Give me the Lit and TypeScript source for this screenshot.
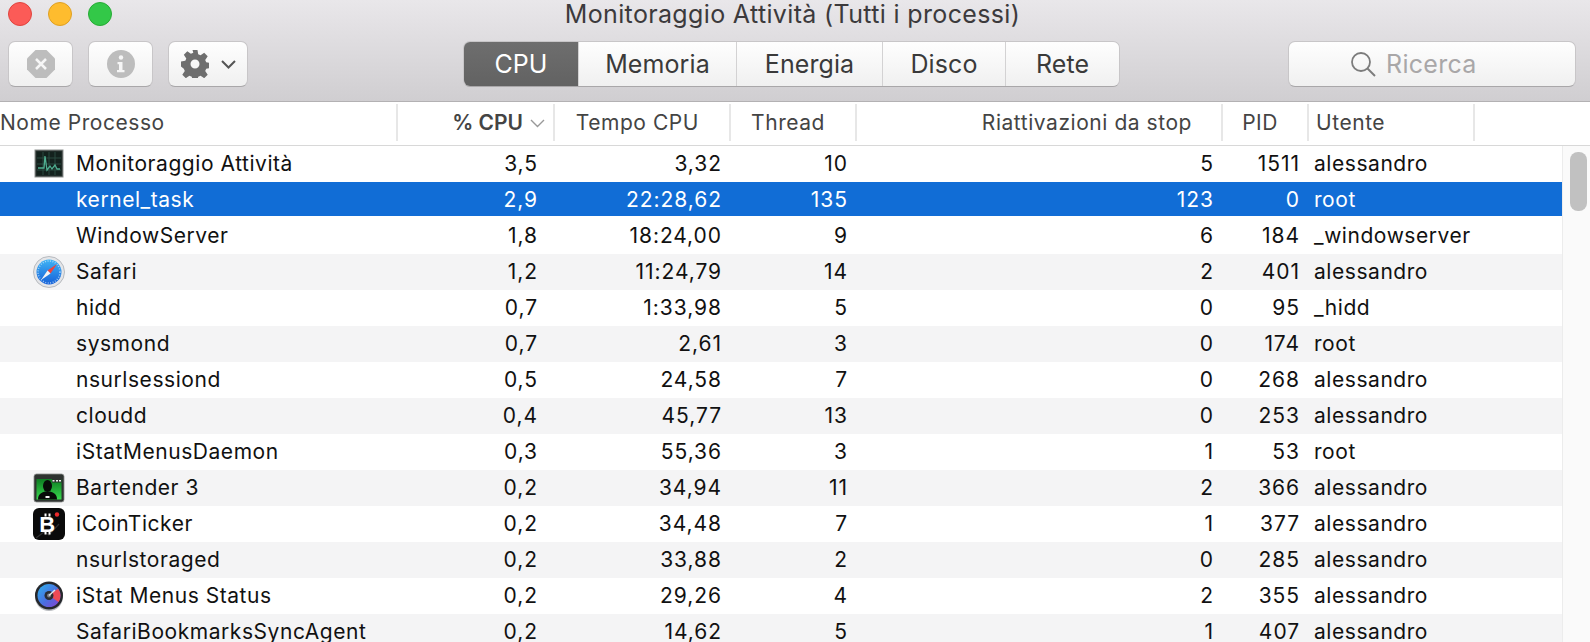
import { LitElement, html, css, svg } from "lit";
import { customElement } from "lit/decorators.js";

const rows: [string, string, string, string, string, string, string, string][] = [
  ["am", "Monitoraggio Attività", "3,5", "3,32", "10", "5", "1511", "alessandro"],
  ["", "kernel_task", "2,9", "22:28,62", "135", "123", "0", "root"],
  ["", "WindowServer", "1,8", "18:24,00", "9", "6", "184", "_windowserver"],
  ["safari", "Safari", "1,2", "11:24,79", "14", "2", "401", "alessandro"],
  ["", "hidd", "0,7", "1:33,98", "5", "0", "95", "_hidd"],
  ["", "sysmond", "0,7", "2,61", "3", "0", "174", "root"],
  ["", "nsurlsessiond", "0,5", "24,58", "7", "0", "268", "alessandro"],
  ["", "cloudd", "0,4", "45,77", "13", "0", "253", "alessandro"],
  ["", "iStatMenusDaemon", "0,3", "55,36", "3", "1", "53", "root"],
  ["bartender", "Bartender 3", "0,2", "34,94", "11", "2", "366", "alessandro"],
  ["coin", "iCoinTicker", "0,2", "34,48", "7", "1", "377", "alessandro"],
  ["", "nsurlstoraged", "0,2", "33,88", "2", "0", "285", "alessandro"],
  ["istat", "iStat Menus Status", "0,2", "29,26", "4", "2", "355", "alessandro"],
  ["", "SafariBookmarksSyncAgent", "0,2", "14,62", "5", "1", "407", "alessandro"],
];

function icon(kind: string) {
  switch (kind) {
    case "am":
      return svg`<svg class="ico" viewBox="0 0 32 32">
        <rect x="2" y="2" width="28" height="27" fill="#2c3432" stroke="#8d918f" stroke-width="1"/>
        <rect x="3.500" y="3.500" width="25" height="24" fill="#13211d"/>
        <path d="M4 10h24M4 16h24M4 22h24M10 4v23M16 4v23M22 4v23" stroke="#2b4a40" stroke-width="1"/>
        <path d="M5 20h6l1-12 2 14 3-4 2 3 3-4 2 4h3" fill="none" stroke="#4fae90" stroke-width="1.300"/>
      </svg>`;
    case "safari":
      return svg`<svg class="ico" viewBox="0 0 32 32">
        <defs><linearGradient id="sf" x1="0" y1="0" x2="0" y2="1"><stop offset="0" stop-color="#3fb4f5"/><stop offset="1" stop-color="#1560d8"/></linearGradient></defs>
        <circle cx="16" cy="16" r="15.500" fill="#e4e5e8" stroke="#a9adb3" stroke-width=".8"/>
        <circle cx="16" cy="16" r="12.500" fill="url(#sf)"/>
        <circle cx="16" cy="16" r="11" fill="none" stroke="#cfe8fb" stroke-width="1.500" stroke-dasharray="1 1.500" opacity=".7"/>
        <path d="M24 8l-9.500 6.500 3 3z" fill="#f0433a"/>
        <path d="M8 24l6.500-9.500 3 3z" fill="#f5f5f5"/>
      </svg>`;
    case "bartender":
      return svg`<svg class="ico" viewBox="0 0 32 32">
        <defs><linearGradient id="bt" x1="0" y1="0" x2="0" y2="1"><stop offset="0" stop-color="#0d7d22"/><stop offset="1" stop-color="#39d94e"/></linearGradient></defs>
        <rect x="1" y="2" width="30" height="28" rx="2.500" fill="#2e3330" stroke="#8a8d8b" stroke-width=".8"/>
        <rect x="3.500" y="7" width="25" height="20.500" fill="url(#bt)"/>
        <rect x="19" y="7" width="9.500" height="3.500" fill="#2e3330"/>
        <path d="M19.500 8.800h2M23 8.800h2M26 8.800h2" stroke="#f0f0f0" stroke-width="1.500"/>
        <ellipse cx="14.500" cy="14" rx="4.500" ry="6" fill="#080c09"/>
        <path d="M5 27.500c0-5 3-7 7-8h5c4 1 7 3 7 8z" fill="#080c09"/>
        <path d="M12.500 24h4v2h-4z" fill="#f2f2f2"/>
      </svg>`;
    case "coin":
      return svg`<svg class="ico coin" viewBox="0 0 32 32">
        <rect x="0" y="0" width="32" height="32" rx="6" fill="#0a0a0a"/>
        <path d="M3 30l8-6 5 3 10-11" fill="none" stroke="#303030" stroke-width="1.200"/>
        <text x="14.500" y="23.500" text-anchor="middle" class="btc">B</text>
        <path d="M12.500 5.500v3M16.500 5.500v3M12.500 23v3.500M16.500 23v3.500" stroke="#fff" stroke-width="2"/>
        <circle cx="24" cy="6.500" r="2.200" fill="#ee2b2b"/>
      </svg>`;
    case "istat":
      return svg`<svg class="ico" viewBox="0 0 32 32">
        <defs><linearGradient id="is" x1="0" y1="0" x2="1" y2="1"><stop offset="0" stop-color="#2eb4ee"/><stop offset=".55" stop-color="#4a6ee0"/><stop offset="1" stop-color="#8a3fd0"/></linearGradient></defs>
        <circle cx="16" cy="17" r="14" fill="#b9bcc0"/>
        <circle cx="16" cy="15.500" r="14" fill="#26282c"/>
        <circle cx="16" cy="15.500" r="11.500" fill="url(#is)"/>
        <path d="M16 15.500L25 8.500A11.500 11.500 0 0 1 25.500 22z" fill="#ee4a55"/>
        <circle cx="16" cy="15.500" r="4.500" fill="#2b2d33"/>
        <circle cx="16" cy="15.500" r="2" fill="#7b7f88"/>
        <path d="M16 15.500L22 10" stroke="#dfe3ea" stroke-width="1.500"/>
      </svg>`;
  }
  return svg`<span class="ico"></span>`;
}

@customElement("app-root")
export class AppRoot extends LitElement {
  static styles = css`
    :host { display: block; width: 1590px; height: 642px; overflow: hidden; background: #fff; font-family: Inter, "Liberation Sans", Arial, sans-serif; color: #111; }
    .chrome { height: 102px; box-sizing: border-box; border-bottom: 1px solid #b3b1b3; background: linear-gradient(#e9e7ea, #d0ced1); display: flex; flex-direction: column; }
    .titlebar { height: 41px; display: grid; grid-template-columns: 1fr auto 1fr; }
    .lights { display: flex; gap: 16px; padding: 2px 0 0 8px; }
    .light { width: 24px; height: 24px; box-sizing: border-box; border-radius: 50%; border: 1px solid; }
    .red { background: #fc5b57; border-color: #e0443e; }
    .yellow { background: #febc2e; border-color: #dfa023; }
    .green { background: #33c848; border-color: #27ab35; }
    .title { font-size: 25px; line-height: 28px; color: #3c3a3c; letter-spacing: .35px; padding-right: 5px; }
    .tools { display: flex; height: 46px; padding: 0 14px 0 8px; }
    .btn, .search { box-sizing: border-box; height: 46px; border-radius: 7px; background: linear-gradient(#fefefe, #f0f0f0); border: 1px solid #c8c6c8; border-bottom-color: #a9a7a9; }
    .btn { width: 65px; margin-right: 15px; display: flex; align-items: center; justify-content: center; }
    .btn.gear { width: 80px; gap: 12px; margin-right: 0; }
    .segs { display: flex; margin-left: 215px; border-radius: 7px; overflow: hidden; border: 1px solid #c8c6c8; border-bottom-color: #a9a7a9; box-sizing: border-box; height: 46px; }
    .seg { box-sizing: border-box; background: linear-gradient(#fefefe, #f0f0f0); display: flex; align-items: center; justify-content: center; font-size: 25px; color: #3a3a3a; border-right: 1px solid #d3d2d3; letter-spacing: .1px; }
    .seg:last-child { border-right: 0; }
    .seg.on { background: linear-gradient(#6e6e6e, #626262); color: #fff; }
    .search { width: 288px; margin-left: auto; display: flex; align-items: center; gap: 10px; padding-left: 61px; font-size: 25px; color: #a9a7a8; letter-spacing: .3px; }
    .head { height: 44px; box-sizing: border-box; border-bottom: 1px solid #d8d8d8; display: grid; grid-template-columns: 398px 157px 176px 126px 366px 86px 166px; font-size: 21px; color: #444; align-items: stretch; padding: 2px 0 4px; letter-spacing: .55px; }
    .hc { display: flex; align-items: center; justify-content: flex-end; box-sizing: border-box; border-right: 2px solid #e7e7e7; white-space: nowrap; }
    .hc.left { justify-content: flex-start; }
    .hc strong { font-weight: 600; letter-spacing: 0; }
    .body { display: grid; grid-template-columns: 1562px 28px; height: 496px; overflow: hidden; }
    .rows { display: flex; flex-direction: column; }
    .row { height: 36px; flex: none; display: grid; grid-template-columns: 76px 321px 141px 184px 126px 366px 86px 1fr; align-items: center; font-size: 21px; line-height: 36px; color: #111; letter-spacing: .55px; }
    .row:nth-child(even) { background: #f4f4f5; }
    .row.sel { background: linear-gradient(#116dd6 34px, #fff 34px); color: #fff; }
    .row.sel span { line-height: 36px; align-self: start; }
    .n { text-align: right; white-space: nowrap; letter-spacing: .95px; }
    .name, .user { white-space: nowrap; }
    .user { padding-left: 14px; }
    .icon-cell { display: flex; justify-content: flex-end; padding-right: 11px; align-items: center; height: 36px; }
    .ico { width: 32px; height: 32px; display: block; }
    .btc { font: 700 22px "Liberation Sans", sans-serif; fill: #fff; }
    .track { background: #fafafa; border-left: 1px solid #ececec; box-sizing: border-box; padding: 6px 3px 0 7px; }
    .thumb { height: 59px; border-radius: 8px; background: #c1c1c1; }
  `;

  render() {
    const segs: [string, number][] = [["CPU", 115], ["Memoria", 158], ["Energia", 146], ["Disco", 123], ["Rete", 113]];
    return html`
      <div class="chrome">
        <div class="titlebar">
          <div class="lights"><div class="light red"></div><div class="light yellow"></div><div class="light green"></div></div>
          <div class="title">Monitoraggio Attività (Tutti i processi)</div>
          <div></div>
        </div>
        <div class="tools">
          <div class="btn">
            <svg width="28" height="28" viewBox="0 0 28 28"><path d="M8.500 0h11L28 8.500v11L19.500 28h-11L0 19.500v-11z" fill="#bdbdbd"/><path d="M9 9l10 10M19 9L9 19" stroke="#f6f6f6" stroke-width="2.500"/></svg>
          </div>
          <div class="btn">
            <svg width="28" height="28" viewBox="0 0 28 28"><circle cx="14" cy="14" r="14" fill="#bdbdbd"/><circle cx="14" cy="7.500" r="2.200" fill="#f6f6f6"/><path d="M10.500 12h5v8h2v2.200h-7.500V20h2v-5.800h-1.500z" fill="#f6f6f6"/></svg>
          </div>
          <div class="btn gear">
            <svg width="28" height="28" viewBox="0 0 28 28"><path d="M11.500 0h5l.7 4.300 2.400 1 3.600-2.500 3.500 3.500-2.500 3.600 1 2.400 4.300.7v5l-4.300.7-1 2.400 2.500 3.600-3.500 3.500-3.600-2.500-2.400 1-.7 4.300h-5l-.7-4.300-2.400-1-3.600 2.500-3.500-3.500 2.500-3.600-1-2.400L0 16.500v-5l4.300-.7 1-2.400-2.500-3.600 3.500-3.500 3.600 2.500 2.400-1zM14 9.500a4.500 4.500 0 1 0 0 9 4.500 4.500 0 0 0 0-9z" fill="#6e6e6e" fill-rule="evenodd"/></svg>
            <svg width="15" height="9" viewBox="0 0 15 9"><path d="M1 1l6.500 6.500L14 1" fill="none" stroke="#555" stroke-width="2"/></svg>
          </div>
          <div class="segs">
            ${segs.map(([t, w], i) => html`<div class="seg ${i === 0 ? "on" : ""}" style="width:${w}px">${t}</div>`)}
          </div>
          <div class="search">
            <svg width="26" height="26" viewBox="0 0 26 26"><circle cx="11" cy="11" r="9" fill="none" stroke="#7c7c7c" stroke-width="1.800"/><path d="M17.500 17.500L25 25" stroke="#7c7c7c" stroke-width="2"/></svg>
            <span>Ricerca</span>
          </div>
        </div>
      </div>
      <div class="head">
        <div class="hc left">Nome Processo</div>
        <div class="hc"><strong>% CPU</strong><svg width="17" height="9" viewBox="0 0 17 9" style="margin:2px 7px 0 6px"><path d="M2 1l6.500 6.500L15 1" fill="none" stroke="#999" stroke-width="1.400"/></svg></div>
        <div class="hc" style="padding-right:30px">Tempo CPU</div>
        <div class="hc" style="padding-right:30px">Thread</div>
        <div class="hc" style="padding-right:29px">Riattivazioni da stop</div>
        <div class="hc" style="padding-right:29px">PID</div>
        <div class="hc left" style="padding-left:7px">Utente</div>
      </div>
      <div class="body">
        <div class="rows">
          ${rows.map((r, i) => html`
            <div class="row ${i === 1 ? "sel" : ""}">
              <div class="icon-cell">${r[0] ? icon(r[0]) : ""}</div>
              <span class="name">${r[1]}</span>
              <span class="n">${r[2]}</span>
              <span class="n">${r[3]}</span>
              <span class="n">${r[4]}</span>
              <span class="n">${r[5]}</span>
              <span class="n">${r[6]}</span>
              <span class="user">${r[7]}</span>
            </div>`)}
        </div>
        <div class="track"><div class="thumb"></div></div>
      </div>
    `;
  }
}
